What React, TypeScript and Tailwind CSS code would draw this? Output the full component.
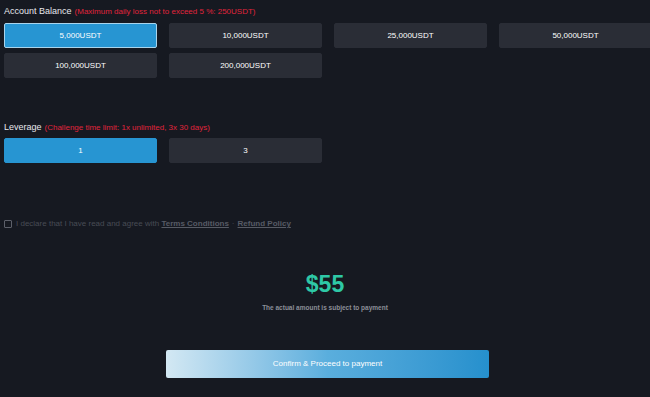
import React, { useState } from "react";

const balances = ["5,000USDT", "10,000USDT", "25,000USDT", "50,000USDT", "100,000USDT", "200,000USDT"];
const leverages = ["1", "3"];

function Opt({ label, active, ring, onClick }: { label: string; active: boolean; ring: boolean; onClick: () => void }) {
  return (
    <button
      onClick={onClick}
      className={
        "w-[153px] h-[25px] rounded-[2px] text-[8px] text-white flex items-center justify-center shrink-0 " +
        (active
          ? ring
            ? "bg-[#2795d2] border border-[#a9d4ec]"
            : "bg-[#2795d2] border border-[#2795d2]"
          : "bg-[#2a2d36] border border-[#2a2d36]")
      }
    >
      {label}
    </button>
  );
}

export default function App() {
  const [bal, setBal] = useState(0);
  const [lev, setLev] = useState(0);
  return (
    <div
      className="w-[650px] h-[397px] overflow-hidden bg-[#161921] text-white"
      style={{ fontFamily: '"Liberation Sans", Arial, sans-serif' }}
    >
      <div className="pl-[4px] pt-[5px]">
        <div className="flex items-baseline gap-[3px] h-[12px]">
          <span className="text-[9px] text-[#e6e8ec]">Account Balance</span>
          <span className="text-[8px] text-[#e0243c]">(Maximum daily loss not to exceed 5 %: 250USDT)</span>
        </div>
        <div className="mt-[6px] grid grid-cols-[153px_153px_153px_153px] gap-x-[12px] gap-y-[5px] w-[700px]">
          {balances.map((b, i) => (
            <Opt key={b} label={b} active={bal === i} ring onClick={() => setBal(i)} />
          ))}
        </div>

        <div className="mt-[43px] flex items-baseline gap-[3px] h-[12px]">
          <span className="text-[9px] text-[#e6e8ec]">Leverage</span>
          <span className="text-[8px] text-[#e0243c]">(Challenge time limit: 1x unlimited, 3x 30 days)</span>
        </div>
        <div className="mt-[5px] flex gap-[12px]">
          {leverages.map((l, i) => (
            <Opt key={l} label={l} active={lev === i} ring={false} onClick={() => setLev(i)} />
          ))}
        </div>

        <div className="mt-[56px] flex items-center gap-[4px] h-[10px]">
          <span className="w-[8px] h-[8px] border border-[#5d606a] rounded-[1px] shrink-0" />
          <span className="text-[8px] text-[#484c55]">
            I declare that I have read and agree with{" "}
            <span className="underline font-bold text-[#575b65]">Terms Conditions</span>
            <span className="mx-[3px]">·</span>
            <span className="underline font-bold text-[#575b65]">Refund Policy</span>
          </span>
        </div>
      </div>

      <div className="mt-[42px] flex flex-col items-center">
        <div className="text-[23px] font-bold text-[#2ec8a6] leading-[26px]">$55</div>
        <div className="mt-[6px] text-[6.5px] font-bold text-[#8b8f98]">The actual amount is subject to payment</div>
      </div>

      <div className="mt-[37px] flex justify-center">
        <button className="w-[323px] h-[28px] rounded-[2px] text-[8px] text-white bg-gradient-to-r from-[#d3e8f3] via-[#5aaedd] to-[#2590cd] ml-[5px]">
          Confirm &amp; Proceed to payment
        </button>
      </div>
    </div>
  );
}
